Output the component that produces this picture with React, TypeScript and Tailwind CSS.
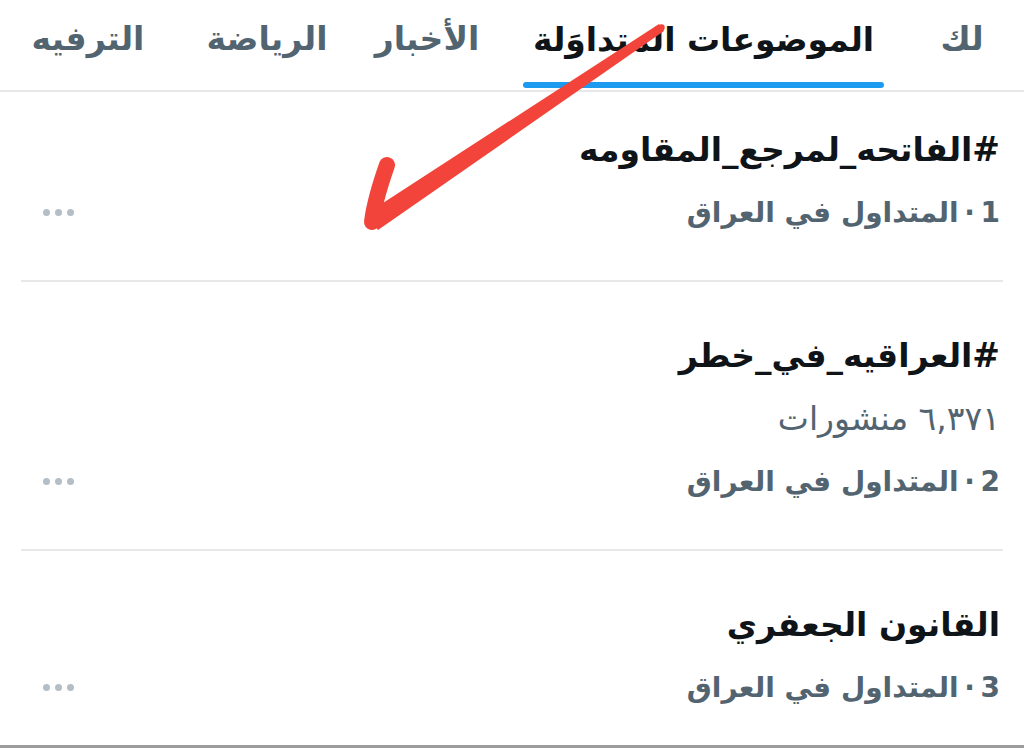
import React from 'react'

const font = { fontFamily: '"DejaVu Sans", "Noto Sans", sans-serif' }

interface Trend {
  title: string
  posts?: string
  rank: string
  first?: boolean
}

const trends: Trend[] = [
  { title: '#الفاتحه_لمرجع_المقاومه', rank: '1\u2009·\u2009المتداول في العراق', first: true },
  { title: '#العراقيه_في_خطر', posts: '٦,٣٧١ منشورات', rank: '2\u2009·\u2009المتداول في العراق' },
  { title: 'القانون الجعفري', rank: '3\u2009·\u2009المتداول في العراق' },
]

function Dots() {
  return (
    <div className="flex items-center gap-[5px] h-[63px] ml-[22px]">
      <span className="w-[7px] h-[7px] rounded-full bg-[#b3bec6]" />
      <span className="w-[7px] h-[7px] rounded-full bg-[#b3bec6]" />
      <span className="w-[7px] h-[7px] rounded-full bg-[#b3bec6]" />
    </div>
  )
}

function TrendRow({ trend }: { trend: Trend }) {
  return (
    <div
      className={`flex items-end justify-between pr-[3px] pb-[36px] border-b-2 border-[#e6e8ea] mx-[21px] ${
        trend.first ? 'pt-[26px]' : 'pt-[42px]'
      }`}
    >
      <div className="flex flex-col">
        <div className="h-[63px] flex items-center text-[33px] font-bold text-[#0f1419]">
          {trend.title}
        </div>
        {trend.posts && (
          <div className="h-[63px] flex items-center text-[33px] text-[#536471]">{trend.posts}</div>
        )}
        <div className="h-[63px] flex items-center text-[28px] font-bold text-[#536471]">
          {trend.rank}
        </div>
      </div>
      <Dots />
    </div>
  )
}

function Arrow() {
  return (
    <svg className="absolute left-0 top-0 pointer-events-none" width="1024" height="748">
      <polygon points="664,31 659,24 366,214 378,230" fill="#f2443a" />
      <circle cx="661.5" cy="27.5" r="3.2" fill="#f2443a" />
      <path
        d="M387 165 C 380 185, 374 205, 372 222"
        stroke="#f2443a"
        strokeWidth="16"
        strokeLinecap="round"
        fill="none"
      />
    </svg>
  )
}

export default function App() {
  return (
    <div dir="rtl" className="relative w-[1024px] h-[748px] bg-white overflow-hidden" style={font}>
      {/* Tabs */}
      <div className="flex h-[92px] border-b-2 border-[#e6e8ea]">
        <div className="w-[124px] flex items-center justify-center pb-[12px] text-[33px] font-bold text-[#536471]">
          لك
        </div>
        <div className="w-[361px] mr-[16px] flex flex-col items-center justify-end">
          <div className="flex-1 flex items-center pb-[2px] text-[33px] font-bold text-[#0f1419] whitespace-nowrap">
            الموضوعات المتداوَلة
          </div>
          <div className="w-full h-[6px] rounded-full bg-[#1d9bf0] mb-[2px]" />
        </div>
        <div className="w-[154px] mr-[19px] flex items-center justify-center pb-[12px] text-[33px] font-bold text-[#536471]">
          الأخبار
        </div>
        <div className="w-[154px] mr-[6px] flex items-center justify-center pb-[12px] text-[33px] font-bold text-[#536471]">
          الرياضة
        </div>
        <div className="w-[140px] mr-[32px] flex items-center justify-center pb-[12px] text-[33px] font-bold text-[#536471]">
          الترفيه
        </div>
      </div>

      {trends.map((t) => (
        <TrendRow key={t.rank} trend={t} />
      ))}

      <div className="absolute left-0 right-0 bottom-0 h-[3px] bg-[#9c9c9c]" />
      <Arrow />
    </div>
  )
}
